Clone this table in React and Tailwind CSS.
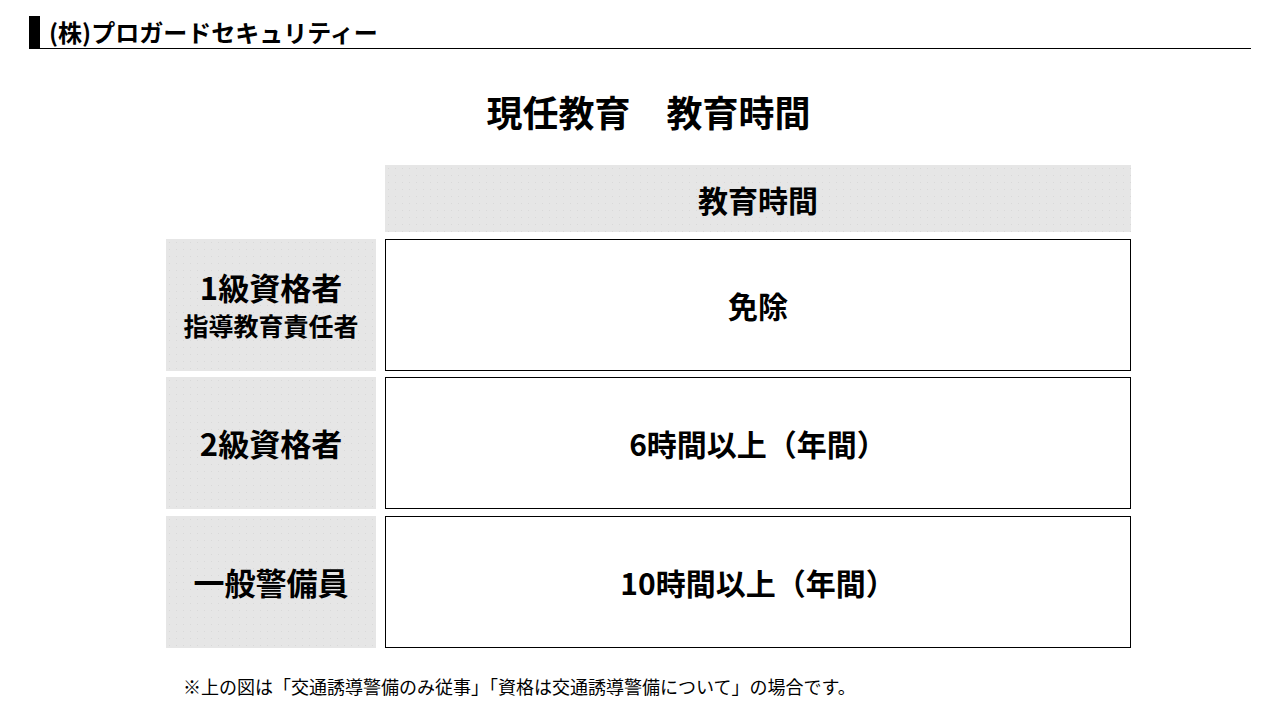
const grayCell =
  "bg-[#e6e6e6] bg-[radial-gradient(#d9d9d9_0.6px,transparent_0.8px)] bg-[length:7px_7px] flex flex-col items-center justify-center";
const whiteCell = "border border-black bg-white flex items-center justify-center";

const rows = [
  { label: ["1級資格者", "指導教育責任者"], value: "免除" },
  { label: ["2級資格者"], value: "6時間以上（年間）" },
  { label: ["一般警備員"], value: "10時間以上（年間）" },
];

export default function App() {
  return (
    <div
      className="w-[1280px] h-[720px] bg-white text-black overflow-hidden"
      style={{ fontFamily: '"Noto Sans CJK JP", "Noto Sans", sans-serif' }}
    >
      {/* 見出し */}
      <div className="pt-[16px] pl-[29px] w-[1251px]">
        <div className="h-[33px] flex items-end border-b border-black">
          <div className="w-[11px] h-[32px] bg-black" />
          <h1 className="ml-[9px] text-[24px] leading-[32px] font-bold">
            (株)プロガードセキュリティー
          </h1>
        </div>
      </div>

      <div className="ml-[166px] w-[965px]">
        <h2 className="mt-[42px] text-center text-[36px] leading-[40px] font-bold">
          現任教育　教育時間
        </h2>

        <div className="mt-[34px] grid grid-cols-[210px_746px] gap-x-[9px] gap-y-[6.5px] grid-rows-[67px_132px_132px_132px]">
          <div />
          <div className={grayCell}>
            <span className="text-[30px] leading-[36px] font-bold">教育時間</span>
          </div>

          {rows.map((r) => (
            <>
              <div key={r.value + "l"} className={grayCell}>
                <p className="text-center text-[31px] leading-[36px] font-bold">
                  {r.label[0]}
                  {r.label[1] && (
                    <>
                      <br />
                      <span className="text-[25px] leading-[32px]">{r.label[1]}</span>
                    </>
                  )}
                </p>
              </div>
              <div key={r.value} className={whiteCell}>
                <span className="text-[30px] leading-[36px] font-bold">{r.value}</span>
              </div>
            </>
          ))}
        </div>

        <p className="mt-[26px] ml-[17px] text-[18px] leading-[24px]">
          ※上の図は「交通誘導警備のみ従事」「資格は交通誘導警備について」の場合です。
        </p>
      </div>
    </div>
  );
}
